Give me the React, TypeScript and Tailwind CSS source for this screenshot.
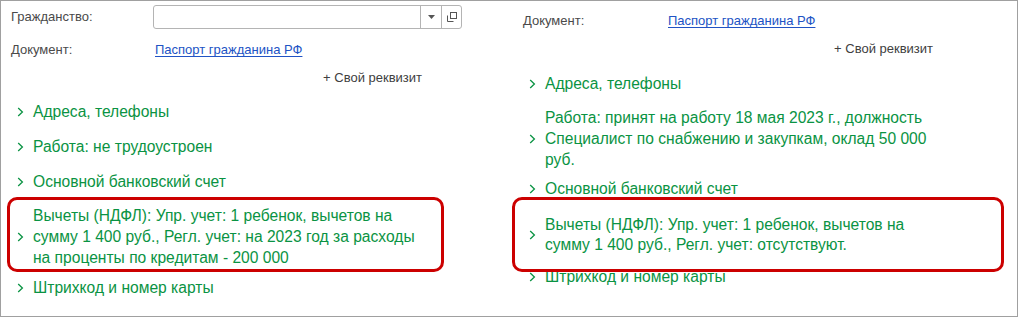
const green = 'text-[#0a9343]'

function Chevron() {
  return (
    <svg width="7" height="10" viewBox="0 0 7 10" className="shrink-0">
      <path d="M1.2 1 L5.4 5 L1.2 9" fill="none" stroke="#0a9343" strokeWidth="1.3" />
    </svg>
  )
}

function Item({ lines, lh = 'leading-[21px]', className = '' }: { lines: string[]; lh?: string; className?: string }) {
  return (
    <div className={`flex items-center ${className}`}>
      <div className="w-[22px] pl-[6px] flex items-center">
        <Chevron />
      </div>
      <div className={`text-[15.6px] ${lh} ${green} whitespace-nowrap`}>
        {lines.map((l, i) => (
          <div key={i}>{l}</div>
        ))}
      </div>
    </div>
  )
}

function Combo() {
  return (
    <div className="ml-[62px] w-[309px] h-[24px] border border-[#b4b4b4] rounded-[3px] flex">
      <div className="flex-1" />
      <div className="w-[21px] border-l border-[#b4b4b4] flex items-center justify-center">
        <svg width="7" height="4" viewBox="0 0 7 4">
          <path d="M0 0 H7 L3.5 4 Z" fill="#555" />
        </svg>
      </div>
      <div className="w-[20px] border-l border-[#b4b4b4] flex items-center justify-center">
        <svg width="10" height="10" viewBox="0 0 10 10">
          <rect x="3.5" y="0.5" width="6" height="6" fill="none" stroke="#555" />
          <path d="M0.5 3.5 V9.5 H6.5" fill="none" stroke="#555" />
        </svg>
      </div>
    </div>
  )
}

export default function App() {
  return (
    <div
      className="w-[1018px] h-[317px] border border-[#a0a0a0] bg-white flex relative overflow-hidden"
      style={{ fontFamily: '"Liberation Sans", Arial, sans-serif' }}
    >
      {/* left panel */}
      <div className="w-[505px] pl-[10px] flex flex-col">
        <div className="mt-[4px] flex items-center h-[24px]">
          <div className="w-[80px] text-[13px] text-[#4a4a4a]">Гражданство:</div>
          <Combo />
        </div>
        <div className="mt-[11px] h-[20px] flex items-center">
          <div className="w-[144px] text-[13px] text-[#4a4a4a]">Документ:</div>
          <a className="text-[13px] text-[#2153c4] underline underline-offset-2">Паспорт гражданина РФ</a>
        </div>
        <div className="mt-[8px] h-[20px] flex items-center w-[411px] justify-end text-[13px] text-[#404040]">
          + Свой реквизит
        </div>
        <div className="mt-[6px] flex flex-col">
          <Item lines={['Адреса, телефоны']} className="h-[35px]" />
          <Item lines={['Работа: не трудоустроен']} className="h-[35px]" />
          <Item lines={['Основной банковский счет']} className="h-[35px]" />
        </div>
        <Item
          className="mt-[6px]"
          lines={[
            'Вычеты (НДФЛ): Упр. учет: 1 ребенок, вычетов на',
            'сумму 1 400 руб., Регл. учет: на 2023 год за расходы',
            'на проценты по кредитам - 200 000',
          ]}
        />
        <Item className="mt-[9px]" lines={['Штрихкод и номер карты']} />
      </div>

      {/* right panel */}
      <div className="flex-1 pl-[17px] flex flex-col">
        <div className="mt-[10px] h-[20px] flex items-center">
          <div className="w-[145px] text-[13px] text-[#4a4a4a]">Документ:</div>
          <a className="text-[13px] text-[#2153c4] underline underline-offset-2">Паспорт гражданина РФ</a>
        </div>
        <div className="mt-[8px] h-[20px] flex items-center w-[410px] justify-end text-[13px] text-[#404040]">
          + Свой реквизит
        </div>
        <Item className="mt-[14px]" lines={['Адреса, телефоны']} />
        <Item
          className="mt-[13px]"
          lines={[
            'Работа: принят на работу 18 мая 2023 г., должность',
            'Специалист по снабжению и закупкам, оклад 50 000',
            'руб.',
          ]}
        />
        <Item className="mt-[8px]" lines={['Основной банковский счет']} />
        <Item
          className="mt-[16px]"
          lh="leading-[20px]"
          lines={['Вычеты (НДФЛ): Упр. учет: 1 ребенок, вычетов на', 'сумму 1 400 руб., Регл. учет: отсутствуют.']}
        />
        <Item className="mt-[11px]" lines={['Штрихкод и номер карты']} />
      </div>

      {/* highlight annotations */}
      <div className="absolute left-[6px] top-[196px] w-[437px] h-[75px] border-[3px] border-[#cc0000] rounded-[10px]" />
      <div className="absolute left-[511px] top-[196px] w-[492px] h-[75px] border-[3px] border-[#cc0000] rounded-[10px]" />
    </div>
  )
}
